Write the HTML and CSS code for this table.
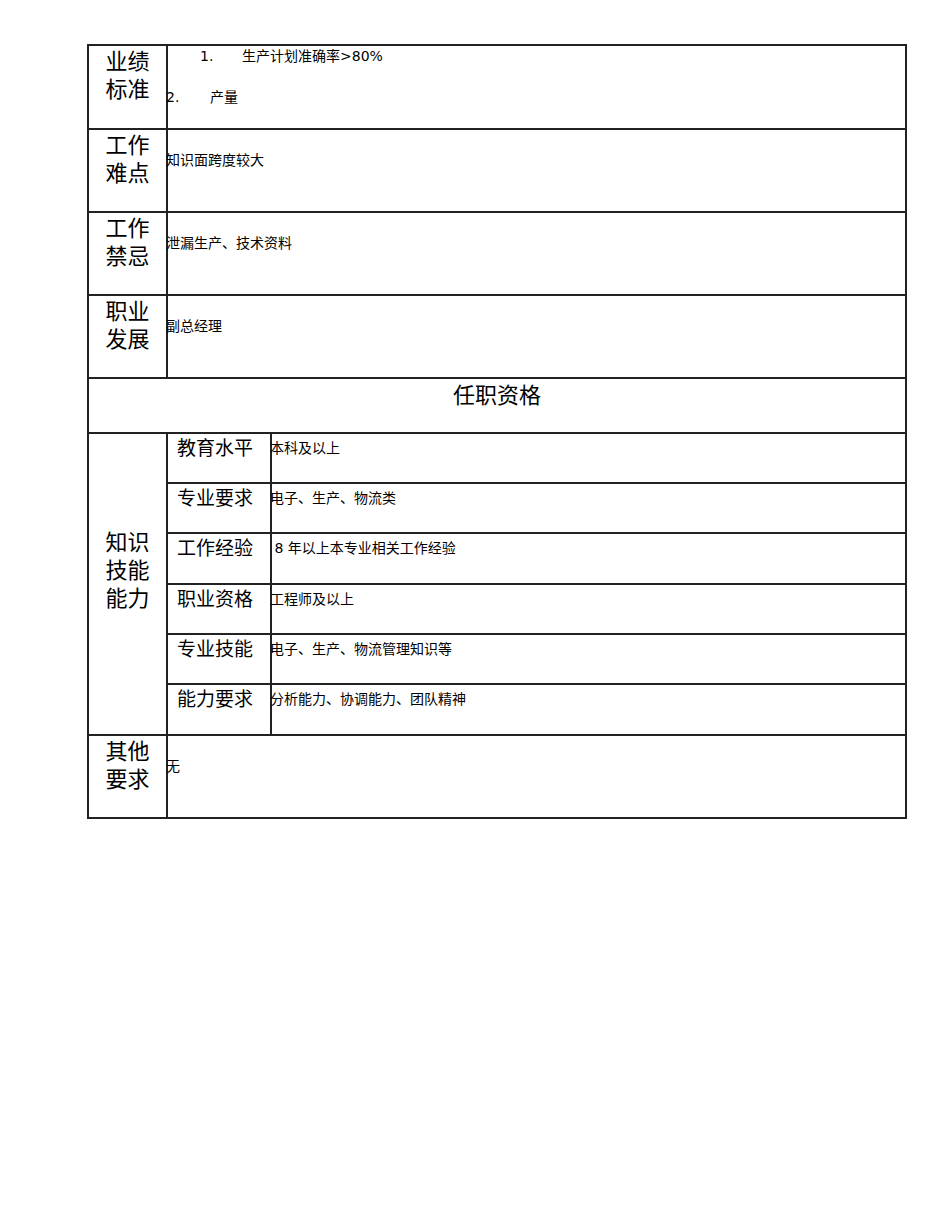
FILE: index.html
```html
<!DOCTYPE html>
<html lang="zh">
<head>
<meta charset="utf-8">
<link rel="stylesheet" href="styles.css">
</head>
<body>
<table class="sheet">
  <colgroup>
    <col class="c1">
    <col class="c2">
    <col class="c3">
  </colgroup>
  <tr class="r84">
    <td class="lbl">业绩<br>标准</td>
    <td class="txt first" colspan="2">
      <div class="li li1"><span class="num">1.</span>生产计划准确率&gt;80%</div>
      <div class="li li2"><span class="num">2.</span>产量</div>
    </td>
  </tr>
  <tr class="r83">
    <td class="lbl">工作<br>难点</td>
    <td class="txt" colspan="2">知识面跨度较大</td>
  </tr>
  <tr class="r83">
    <td class="lbl">工作<br>禁忌</td>
    <td class="txt" colspan="2">泄漏生产、技术资料</td>
  </tr>
  <tr class="r83">
    <td class="lbl">职业<br>发展</td>
    <td class="txt" colspan="2">副总经理</td>
  </tr>
  <tr class="r55">
    <td class="head" colspan="3">任职资格</td>
  </tr>
  <tr class="r50">
    <td class="lbl big" rowspan="6">知识<br>技能<br>能力</td>
    <td class="sub">教育水平</td>
    <td class="stxt">本科及以上</td>
  </tr>
  <tr class="r50">
    <td class="sub">专业要求</td>
    <td class="stxt">电子、生产、物流类</td>
  </tr>
  <tr class="r51">
    <td class="sub">工作经验</td>
    <td class="stxt">&nbsp;8 年以上本专业相关工作经验</td>
  </tr>
  <tr class="r50">
    <td class="sub">职业资格</td>
    <td class="stxt">工程师及以上</td>
  </tr>
  <tr class="r50">
    <td class="sub">专业技能</td>
    <td class="stxt">电子、生产、物流管理知识等</td>
  </tr>
  <tr class="r51">
    <td class="sub">能力要求</td>
    <td class="stxt">分析能力、协调能力、团队精神</td>
  </tr>
  <tr class="r83">
    <td class="lbl">其他<br>要求</td>
    <td class="txt" colspan="2">无</td>
  </tr>
</table>
</body>
</html>
```

FILE: styles.css
```css
html, body {
  margin: 0;
  padding: 0;
  background: #ffffff;
}
body {
  font-family: "DejaVu Sans", "Noto Sans CJK SC", sans-serif;
  color: #000;
  padding: 44px 0 0 87px;
}
.sheet {
  border-collapse: collapse;
  table-layout: fixed;
  width: 818px;
}
.c1 { width: 79px; }
.c2 { width: 104px; }
.c3 { width: 635px; }
.sheet td {
  border: 2px solid #222;
  padding: 0;
  vertical-align: top;
}
.r84 { height: 84px; }
.r83 { height: 83px; }
.r55 { height: 55px; }
.r50 { height: 50px; }
.r51 { height: 51px; }
.lbl {
  font-size: 22px;
  line-height: 28px;
  text-align: center;
}
.sheet td.lbl { padding-top: 2px; }
.sheet td.big { vertical-align: top; padding-top: 95px; }
.txt {
  font-size: 14px;
  line-height: 18px;
  text-indent: -2px;
}
.sheet td.txt { padding-top: 21px; }
.sheet td.first { padding-top: 1px; }
.li { white-space: nowrap; }
.li1 { padding-left: 34px; }
.li1 .num { display: inline-block; width: 42px; text-indent: 0; }
.li2 { margin-top: 23px; }
.li2 .num { display: inline-block; width: 44px; text-indent: 0; }
.head {
  font-size: 22px;
  line-height: 30px;
  text-align: center;
}
.sheet td.head { padding-top: 2px; }
.sub {
  font-size: 19px;
  line-height: 26px;
  text-align: left;
}
.sheet td.sub { padding-top: 1px; padding-left: 9px; }
.stxt {
  font-size: 14px;
  line-height: 18px;
  text-indent: -2px;
}
.sheet td.stxt { padding-top: 5px; }
```
